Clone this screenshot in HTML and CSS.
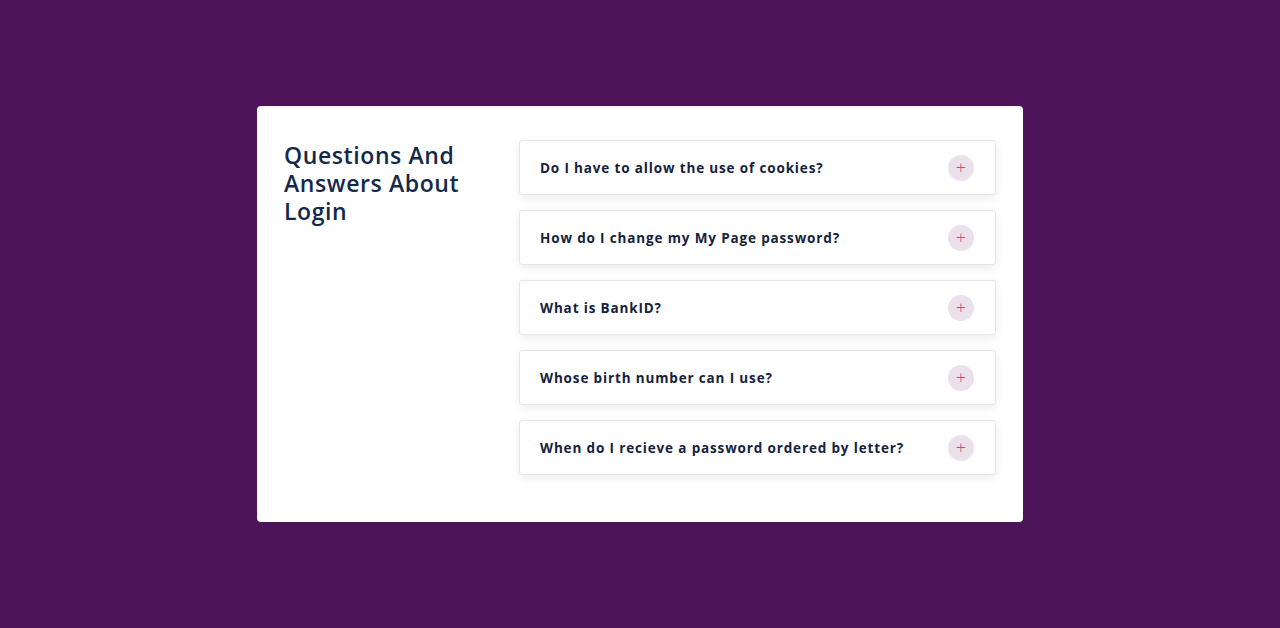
FILE: index.html
```html
<!DOCTYPE html>
<html lang="en">

<head>
    <meta charset="UTF-8">
    <meta name="viewport" content="width=device-width, initial-scale=1.0">
    <title>Questions And Answers About Login</title>
    <link rel="stylesheet" href="styles.css">
</head>

<body>
<div class="faq">
    <h1 class="faq_title">Questions And Answers About Login</h1>
    <div class="faq_list">
        <div class="faq_item">
            <span>Do I have to allow the use of cookies?</span>
            <i class="faq_btn">+</i>
        </div>
        <div class="faq_item">
            <span>How do I change my My Page password?</span>
            <i class="faq_btn">+</i>
        </div>
        <div class="faq_item">
            <span>What is BankID?</span>
            <i class="faq_btn">+</i>
        </div>
        <div class="faq_item">
            <span>Whose birth number can I use?</span>
            <i class="faq_btn">+</i>
        </div>
        <div class="faq_item">
            <span>When do I recieve a password ordered by letter?</span>
            <i class="faq_btn">+</i>
        </div>
    </div>
</div>
</body>

</html>
```

FILE: styles.css
```css
html, body {
    height: 100%;
}

body {
    margin: 0;
    background: #4d145a;
    font-family: "Open Sans", "Noto Sans", sans-serif;
    display: flex;
    align-items: center;
    justify-content: center;
}

.faq {
    width: 766px;
    box-sizing: border-box;
    background: #fff;
    border-radius: 4px;
    padding: 34px 27px 47px;
    display: grid;
    grid-template-columns: 208px 1fr;
    column-gap: 27px;
    align-items: start;
}

.faq_title {
    margin: 0;
    font-size: 23px;
    font-weight: 600;
    line-height: 28px;
    letter-spacing: 0.6px;
    color: #13294b;
    padding-top: 1px;
}

.faq_list {
    display: flex;
    flex-direction: column;
    gap: 15px;
}

.faq_item {
    height: 55px;
    box-sizing: border-box;
    border: 1px solid #e6e6e6;
    border-radius: 3px;
    box-shadow: 0 3px 10px rgba(0, 0, 0, 0.08);
    padding: 0 20px;
    display: flex;
    align-items: center;
    justify-content: space-between;
    font-size: 13.5px;
    font-weight: 700;
    letter-spacing: 0.85px;
    color: #14223d;
}

.faq_btn {
    width: 26px;
    height: 26px;
    border-radius: 50%;
    background: #ebe1ea;
    color: #c0507a;
    font-style: normal;
    font-weight: 300;
    font-size: 18px;
    line-height: 25px;
    text-align: center;
    letter-spacing: 0;
    margin-right: 1px;
}
```
